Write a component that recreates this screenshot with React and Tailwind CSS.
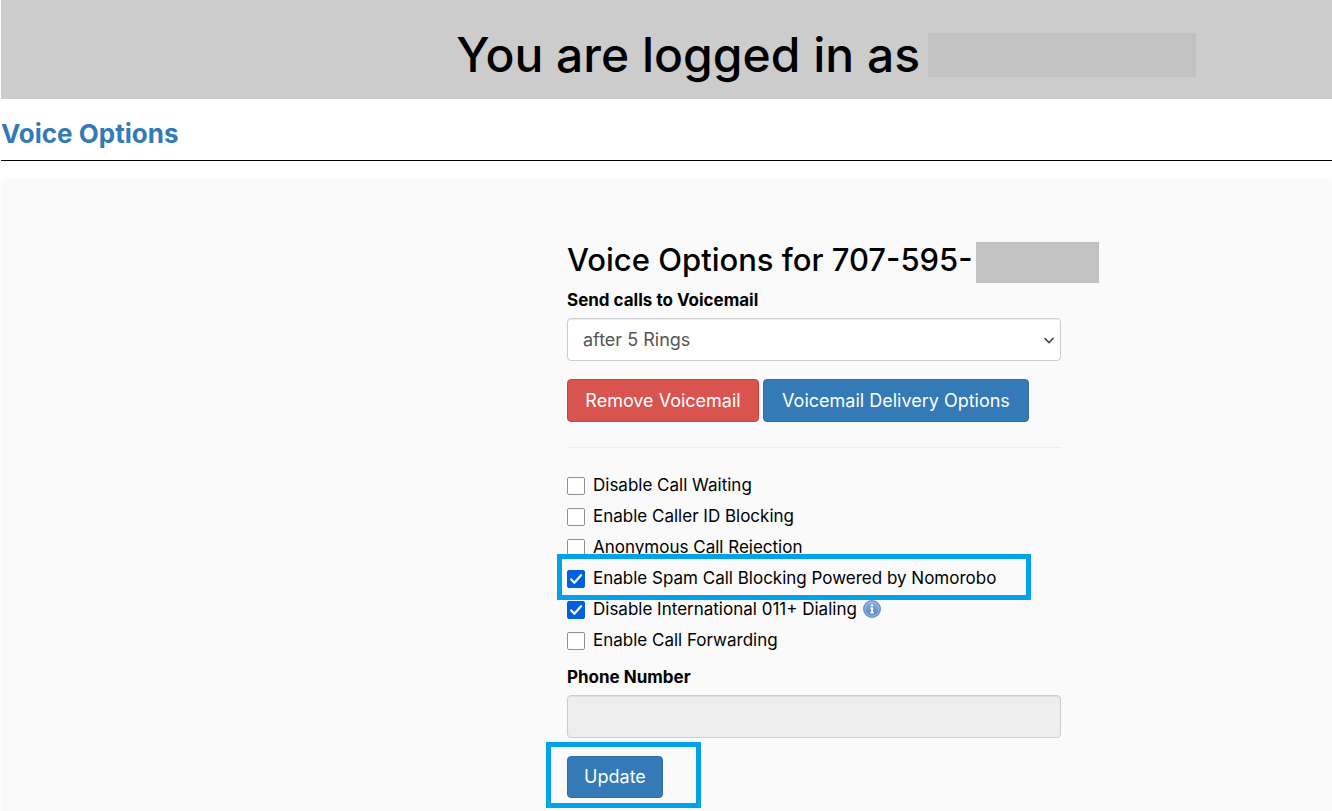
import React, { useState } from 'react';

const initialOptions = [
  { id: 'call-waiting', label: 'Disable Call Waiting', checked: false },
  { id: 'caller-id', label: 'Enable Caller ID Blocking', checked: false },
  { id: 'anonymous', label: 'Anonymous Call Rejection', checked: false },
  { id: 'spam', label: 'Enable Spam Call Blocking Powered by Nomorobo', checked: true, highlight: true },
  { id: 'international', label: 'Disable International 011+ Dialing', checked: true, info: true },
  { id: 'forwarding', label: 'Enable Call Forwarding', checked: false },
];

const InfoIcon = () => (
  <svg width="18" height="18" viewBox="0 0 18 18" className="ml-1.5 shrink-0" aria-hidden="true">
    <defs>
      <linearGradient id="info-fill" x1="0" y1="0" x2="0" y2="1">
        <stop offset="0" stopColor="#86abdb" />
        <stop offset="1" stopColor="#5b88c4" />
      </linearGradient>
    </defs>
    <circle cx="9" cy="9" r="9" fill="#6a92c6" />
    <circle cx="9" cy="9" r="7.4" fill="#a6c2e5" />
    <circle cx="9" cy="9" r="6.6" fill="url(#info-fill)" />
    <rect x="8" y="4.4" width="2" height="2" fill="#fff" />
    <path d="M7.2 7.6H10v4.6h1v1.2H7.2v-1.2h1V8.8h-1z" fill="#fff" />
  </svg>
);

const OptionRow = ({ option, onToggle }) => (
  <div className="relative flex items-center h-[31px]">
    <span className="relative mt-0.5 mr-2 h-[18px] w-[18px] shrink-0">
      <input
        id={option.id}
        type="checkbox"
        checked={option.checked}
        onChange={() => onToggle(option.id)}
        className="block h-[18px] w-[18px] appearance-none rounded-xs border border-[#8f8f9d] bg-white checked:border-[#0060df] checked:bg-[#0060df]"
      />
      {option.checked && (
        <svg viewBox="0 0 18 18" className="pointer-events-none absolute inset-0" aria-hidden="true">
          <path d="M4.2 9.4l3.2 3.4 6.6-7.6" fill="none" stroke="#fff" strokeWidth="2.2" strokeLinecap="round" strokeLinejoin="round" />
        </svg>
      )}
    </span>
    <label htmlFor={option.id} className="whitespace-nowrap text-[17px] leading-6">{option.label}</label>
    {option.info && <InfoIcon />}
    {option.highlight && (
      <div className="pointer-events-none absolute -top-2 -left-2.5 h-[46px] w-[474px] border-5 border-[#00a2e8]" />
    )}
  </div>
);

export default function App() {
  const [rings, setRings] = useState('5');
  const [options, setOptions] = useState(initialOptions);
  const [phone, setPhone] = useState('');

  const toggleOption = (id) => {
    setOptions(options.map((o) => (o.id === id ? { ...o, checked: !o.checked } : o)));
  };

  const forwarding = options.find((o) => o.id === 'forwarding').checked;

  return (
    <div className="flex min-h-screen flex-col bg-white pl-px font-['Inter',sans-serif] text-black">
      <header className="flex items-center gap-2 bg-[#ccc] pt-[33px] pb-[22px] pl-[34.2%]">
        <h1 className="whitespace-nowrap text-5xl leading-11 font-medium">You are logged in as</h1>
        <span className="h-11 w-[268px] bg-[#c2c2c2]" />
      </header>

      <h2 className="border-b border-black pt-5 pb-3 text-[26px] leading-[29px] font-bold text-[#337ab7]">
        Voice Options
      </h2>

      <main className="mt-[18px] grid flex-1 grid-cols-[566fr_494fr_271fr] rounded-t-md bg-[#fafafa] pt-[63px]">
        <form className="col-start-2 min-w-0" onSubmit={(e) => e.preventDefault()}>
          <div className="flex items-start gap-[3px]">
            <h3 className="whitespace-nowrap text-[31px] leading-9 font-medium">Voice Options for 707-595-</h3>
            <span className="h-[41px] w-[123px] shrink-0 bg-[#c2c2c2]" />
          </div>

          <label htmlFor="rings" className="mt-[5px] block text-[17px] leading-6 font-bold">Send calls to Voicemail</label>
          <div className="relative mt-1.5">
            <select
              id="rings"
              value={rings}
              onChange={(e) => setRings(e.target.value)}
              className="block h-[43px] w-full appearance-none rounded border border-[#ccc] bg-white px-[15px] text-lg text-[#555] shadow-[inset_0_1px_1px_rgba(0,0,0,0.075)]"
            >
              <option value="3">after 3 Rings</option>
              <option value="4">after 4 Rings</option>
              <option value="5">after 5 Rings</option>
            </select>
            <svg width="12" height="7" viewBox="0 0 12 7" className="pointer-events-none absolute top-[19px] right-1.5" aria-hidden="true">
              <path d="M1.5 1L6 5.5 10.5 1" fill="none" stroke="#444" strokeWidth="1.6" />
            </svg>
          </div>

          <div className="mt-[18px] flex gap-1">
            <button type="button" className="h-[43px] w-48 whitespace-nowrap rounded border border-[#d43f3a] bg-[#d9534f] text-lg text-white">
              Remove Voicemail
            </button>
            <button type="button" className="h-[43px] w-[266px] whitespace-nowrap rounded border border-[#2e6da4] bg-[#337ab7] text-lg text-white">
              Voicemail Delivery Options
            </button>
          </div>

          <hr className="mt-[25px] border-[#eee]" />

          <div className="mt-[21px]">
            {options.map((option) => (
              <OptionRow key={option.id} option={option} onToggle={toggleOption} />
            ))}
          </div>

          <label htmlFor="phone" className="mt-2.5 block text-[17px] leading-6 font-bold">Phone Number</label>
          <input
            id="phone"
            type="tel"
            value={phone}
            onChange={(e) => setPhone(e.target.value)}
            disabled={!forwarding}
            className="mt-1.5 block h-[43px] w-full rounded border border-[#ccc] bg-white px-[15px] text-lg text-[#555] shadow-[inset_0_1px_1px_rgba(0,0,0,0.075)] disabled:bg-[#eee]"
          />

          <div className="relative mt-[18px] mb-3 w-24">
            <button type="submit" className="block h-[42px] w-full rounded border border-[#2e6da4] bg-[#337ab7] text-lg text-white">
              Update
            </button>
            <div className="pointer-events-none absolute -top-3.5 -left-[21px] h-[66px] w-[155px] border-5 border-[#00a2e8]" />
          </div>
        </form>
      </main>
    </div>
  );
}
